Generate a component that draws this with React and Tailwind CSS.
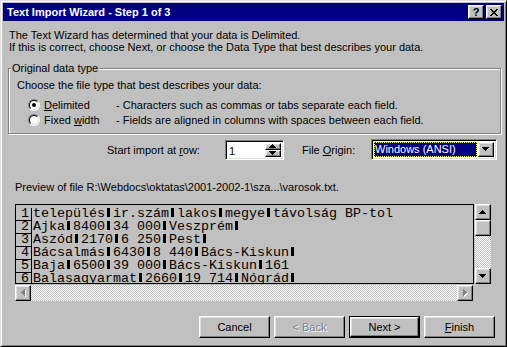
import React from "react";

const raised =
  "border border-t-white border-l-white border-b-black border-r-black shadow-[inset_-1px_-1px_#808080,inset_1px_1px_#dfdfdf] bg-[#c0c0c0]";
const sunken =
  "border border-t-[#808080] border-l-[#808080] border-b-white border-r-white shadow-[inset_1px_1px_#000,inset_-1px_-1px_#dfdfdf]";
const checker =
  "bg-[repeating-conic-gradient(#ffffff_0%_25%,#c0c0c0_0%_50%)] bg-[length:2px_2px]";

function Tri({ dir = "down", color = "#000", shadow = false }) {
  const paths = {
    up: "M3.5 0 L7 4 L0 4 Z",
    down: "M0 0 L7 0 L3.5 4 Z",
    left: "M4 0 L4 7 L0 3.5 Z",
    right: "M0 0 L4 3.5 L0 7 Z",
  };
  const vert = dir === "up" || dir === "down";
  return (
    <svg
      width={vert ? 8 : 5}
      height={vert ? 5 : 8}
      viewBox={vert ? "0 0 8 5" : "0 0 5 8"}
      shapeRendering="crispEdges"
    >
      {shadow && (
        <path d={paths[dir]} transform="translate(1 1)" fill="#fff" />
      )}
      <path d={paths[dir]} fill={color} />
    </svg>
  );
}

function Radio({ checked }) {
  return (
    <span className="inline-flex w-[12px] h-[12px] rounded-full border border-t-[#808080] border-l-[#808080] border-b-white border-r-white">
      <span className="flex-1 rounded-full border border-t-black border-l-black border-b-[#dfdfdf] border-r-[#dfdfdf] bg-white flex items-center justify-center">
        {checked && <span className="w-[4px] h-[4px] rounded-full bg-black" />}
      </span>
    </span>
  );
}

function Sep() {
  return (
    <span className="inline-block w-[8px] h-[9px]">
      <span className="block ml-[2px] w-[3px] h-[9px] bg-black" />
    </span>
  );
}

const rows = [
  ["település", "ir.szám", "lakos", "megye", "távolság BP-tol"],
  ["Ajka", "8400", "34 000", "Veszprém", ""],
  ["Aszód", "2170", "6 250", "Pest", ""],
  ["Bácsalmás", "6430", "8 440", "Bács-Kiskun", ""],
  ["Baja", "6500", "39 000", "Bács-Kiskun", "161"],
  ["Balasagyarmat", "2660", "19 714", "Nógrád", ""],
];

function Row({ n, cells }) {
  return (
    <div className="flex h-[13px] items-stretch shrink-0">
      <div className="w-[16px] shrink-0 border-r border-b border-black flex items-center justify-end pr-[2px] leading-[12px]">
        {n}
      </div>
      <div className="whitespace-pre leading-[12px] pl-[1px]">
        {cells.map((c, i) => (
          <React.Fragment key={i}>
            {i > 0 && <Sep />}
            {c}
          </React.Fragment>
        ))}
      </div>
    </div>
  );
}

function Button({ children, disabled, def }) {
  const inner = (
    <div
      className={`${raised} w-full h-full flex items-center justify-center ${
        disabled ? "text-[#808080] [text-shadow:1px_1px_#fff]" : ""
      }`}
    >
      {children}
    </div>
  );
  if (def)
    return (
      <div className="w-[71px] h-[22px] border border-black flex">
        {inner}
      </div>
    );
  return <div className="w-[71px] h-[22px] flex">{inner}</div>;
}

export default function App() {
  return (
    <div className="w-[507px] h-[347px] bg-[#c0c0c0] border border-t-[#dfdfdf] border-l-[#dfdfdf] border-b-black border-r-black shadow-[inset_1px_1px_#fff,inset_-1px_-1px_#808080] p-[2px] flex flex-col overflow-hidden font-['Liberation_Sans',Arial,sans-serif] text-[11px] leading-[12px] text-black">
      {/* Title bar */}
      <div className="h-[18px] shrink-0 bg-[#000080] flex items-center pl-[4px] pr-[2px]">
        <span className="text-white font-bold text-[11px] flex-1">
          Text Import Wizard - Step 1 of 3
        </span>
        <div className={`${raised} w-[16px] h-[14px] flex items-center justify-center font-bold text-[11px] leading-[10px]`}>
          ?
        </div>
        <div className={`${raised} w-[16px] h-[14px] ml-[2px] flex items-center justify-center`}>
          <svg width="8" height="7" viewBox="0 0 8 7" shapeRendering="crispEdges">
            <path
              d="M0 0h2v1h-2zM6 0h2v1h-2zM1 1h2v1h-2zM5 1h2v1h-2zM2 2h4v1h-4zM3 3h2v1h-2zM2 4h4v1h-4zM1 5h2v1h-2zM5 5h2v1h-2zM0 6h2v1h-2zM6 6h2v1h-2z"
              fill="#000"
            />
          </svg>
        </div>
      </div>

      {/* Intro text */}
      <div className="ml-[6px] mt-[8px]">
        <div>The Text Wizard has determined that your data is Delimited.</div>
        <div>
          If this is correct, choose Next, or choose the Data Type that best
          describes your data.
        </div>
      </div>

      {/* Group box */}
      <fieldset className="ml-[5px] mt-[9px] w-[493px] h-[72px] border border-[#808080] shadow-[inset_1px_1px_#fff,1px_1px_#fff] shrink-0">
        <legend className="ml-[2px] px-[1px] bg-[#c0c0c0]">Original data type</legend>
        <div className="ml-[8px] mt-[5px]">
          Choose the file type that best describes your data:
        </div>
        <div className="mt-[6px] ml-[19px] flex flex-col">
          <div className="flex items-center h-[15px]">
            <Radio checked />
            <span className="ml-[4px] w-[72px]">
              <span className="underline">D</span>elimited
            </span>
            <span>- Characters such as commas or tabs separate each field.</span>
          </div>
          <div className="flex items-center h-[15px]">
            <Radio />
            <span className="ml-[4px] w-[72px]">
              Fixed <span className="underline">w</span>idth
            </span>
            <span>- Fields are aligned in columns with spaces between each field.</span>
          </div>
        </div>
      </fieldset>

      {/* Start import row */}
      <div className="mt-[5px] h-[21px] flex items-center shrink-0">
        <span className="ml-[104px] w-[118px]">
          Start import at <span className="underline">r</span>ow:
        </span>
        <div className={`${sunken} w-[59px] h-[20px] bg-white flex items-stretch p-[2px]`}>
          <span className="flex-1 pl-[1px] leading-[16px]">1</span>
          <div className="w-[16px] flex flex-col">
            <div className={`${raised} h-[8px] flex items-center justify-center`}>
              <Tri dir="up" />
            </div>
            <div className={`${raised} h-[8px] flex items-center justify-center`}>
              <Tri dir="down" />
            </div>
          </div>
        </div>
        <span className="ml-[18px] w-[69px]">
          File <span className="underline">O</span>rigin:
        </span>
        <div className={`${sunken} w-[126px] h-[21px] bg-white flex items-stretch p-[2px]`}>
          <div className="flex-1 bg-[#000080] text-white outline-1 outline-dotted outline-[#ffff80] -outline-offset-1 pl-[1px] leading-[15px] mr-[1px]">
            Windows (ANSI)
          </div>
          <div className={`${raised} w-[16px] flex items-center justify-center`}>
            <Tri dir="down" />
          </div>
        </div>
      </div>

      {/* Preview label */}
      <div className="ml-[12px] mt-[21px]">
        Preview of file R:\Webdocs\oktatas\2001-2002-1\sza...\varosok.txt.
      </div>

      {/* Preview box */}
      <div className="ml-[12px] mt-[11px] w-[476px] h-[97px] flex flex-col shrink-0">
        <div className="flex h-[80px]">
          <div className="flex-1 border border-black bg-[#c0c0c0] overflow-hidden font-['Liberation_Mono',monospace] text-[13.33px] flex flex-col pt-[3px]">
            {rows.map((r, i) => (
              <Row key={i} n={i + 1} cells={r} />
            ))}
          </div>
          <div className="w-[16px] ml-[1px] flex flex-col">
            <div className={`${raised} h-[16px] flex items-center justify-center`}>
              <Tri dir="up" />
            </div>
            <div className={`${raised} h-[16px]`} />
            <div className={`flex-1 ${checker}`} />
            <div className={`${raised} h-[16px] flex items-center justify-center`}>
              <Tri dir="down" />
            </div>
          </div>
        </div>
        <div className="flex h-[16px] mt-[1px]">
          <div className="flex w-[458px]">
            <div className={`${raised} w-[16px] flex items-center justify-center`}>
              <Tri dir="left" color="#808080" shadow />
            </div>
            <div className={`flex-1 ${checker}`} />
            <div className={`${raised} w-[16px] flex items-center justify-center`}>
              <Tri dir="right" color="#808080" shadow />
            </div>
          </div>
        </div>
      </div>

      {/* Buttons */}
      <div className="mt-[15px] mr-[9px] flex justify-end gap-[4px]">
        <Button>Cancel</Button>
        <Button disabled>&lt; Back</Button>
        <Button def>Next &gt;</Button>
        <Button>
          <span className="underline">F</span>inish
        </Button>
      </div>
    </div>
  );
}
